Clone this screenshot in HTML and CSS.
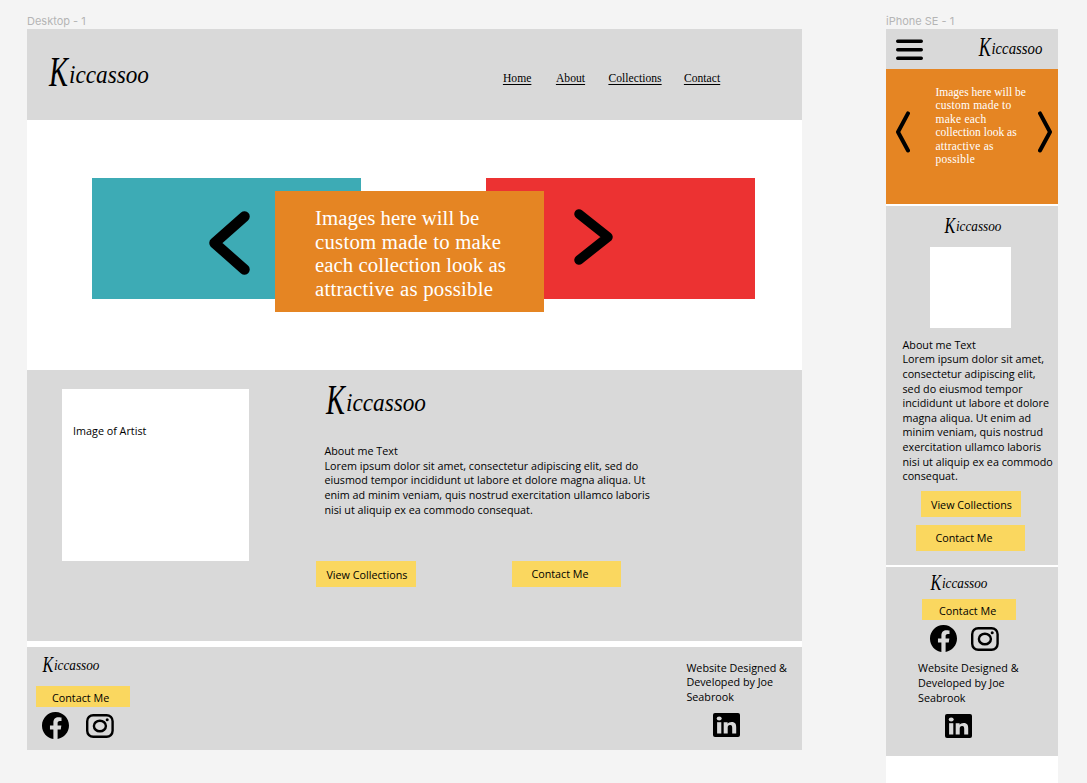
FILE: index.html
```html
<!DOCTYPE html>
<html lang="en">
<head>
<meta charset="utf-8">
<title>Kiccassoo</title>
<link rel="stylesheet" href="styles.css">
</head>
<body>
<svg class="sprite" aria-hidden="true">
  <symbol id="facebook" viewBox="0 0 16 16"><path d="M16 8.049c0-4.446-3.582-8.05-8-8.05C3.58 0-.002 3.603-.002 8.05c0 4.017 2.926 7.347 6.75 7.951v-5.625h-2.03V8.05H6.75V6.275c0-2.017 1.195-3.131 3.022-3.131.876 0 1.791.157 1.791.157v1.98h-1.009c-.993 0-1.303.621-1.303 1.258v1.51h2.218l-.354 2.326H9.25V16c3.824-.604 6.750-3.934 6.750-7.951z"/></symbol>
  <symbol id="instagram" viewBox="0 0 28 24"><rect x="1.200" y="1.200" width="25.400" height="21.600" rx="6" fill="none" stroke="#000" stroke-width="2.400"/><ellipse cx="13.900" cy="12" rx="6" ry="5.300" fill="none" stroke="#000" stroke-width="2.400"/><circle cx="21.200" cy="5.700" r="1.500"/></symbol>
  <symbol id="linkedin" viewBox="0 0 27 24"><rect width="27" height="24" rx="2"/><g fill="#d9d9d9"><ellipse cx="6.200" cy="5.500" rx="2.500" ry="2.100"/><rect x="4.100" y="9.200" width="4.200" height="11.300"/><path d="M10.700 9.200h3.900v1.600c.8-1.200 2.200-1.900 4-1.900 3.900 0 4.600 2.300 4.600 5.400v6.200h-4V15c0-1.400 0-3-2.100-3s-2.400 1.500-2.400 2.900v5.600h-4z"/></g></symbol>
</svg>
<main class="canvas">
  <section class="artboard desktop">
    <h2 class="artboard-name">Desktop - 1</h2>
    <div class="frame">
      <header class="site-header">
        <svg class="logo" viewBox="0 0 102 36"><text class="logo-text logo-cap" x="1" y="29" textLength="19" lengthAdjust="spacingAndGlyphs">K</text><text class="logo-text" x="21" y="26" textLength="80" lengthAdjust="spacingAndGlyphs">iccassoo</text></svg>
        <nav class="nav"><a class="home">Home</a><a class="about-link">About</a><a class="collections-link">Collections</a><a>Contact</a></nav>
      </header>
      <section class="hero">
        <div class="card teal"><svg class="arrow-left" viewBox="0 0 42 64"><path d="M35.500 5.500L5.500 32l30 26.500"/></svg></div>
        <div class="card orange"><p>Images here will be<br><span class="wide">custom made to make</span><br>each collection look as<br><span class="wide">attractive as possible</span></p></div>
        <div class="card red"><svg class="arrow-right" viewBox="0 0 39 56"><path d="M5 5l29 23L5 51"/></svg></div>
      </section>
      <section class="about">
        <div class="portrait">Image of Artist</div>
        <div class="about-body">
          <svg class="logo" viewBox="0 0 102 36"><text class="logo-text logo-cap" x="1" y="29" textLength="19" lengthAdjust="spacingAndGlyphs">K</text><text class="logo-text" x="21" y="26" textLength="80" lengthAdjust="spacingAndGlyphs">iccassoo</text></svg>
          <p class="copy">About me Text<br>Lorem ipsum dolor sit amet, consectetur adipiscing elit, sed do<br>eiusmod tempor incididunt ut labore et dolore magna aliqua. Ut<br>enim ad minim veniam, quis nostrud exercitation ullamco laboris<br>nisi ut aliquip ex ea commodo consequat.</p>
          <div class="actions"><a class="button view">View Collections</a><a class="button contact">Contact Me</a></div>
        </div>
      </section>
      <footer class="site-footer">
        <div class="footer-brand">
          <svg class="logo small" viewBox="0 0 102 36"><text class="logo-text logo-cap" x="1" y="29" textLength="19" lengthAdjust="spacingAndGlyphs">K</text><text class="logo-text" x="21" y="26" textLength="80" lengthAdjust="spacingAndGlyphs">iccassoo</text></svg>
          <a class="button compact">Contact Me</a>
          <div class="social"><svg class="facebook"><use href="#facebook"/></svg><svg class="instagram"><use href="#instagram"/></svg></div>
        </div>
        <div class="credit"><p>Website Designed &amp;<br>Developed by Joe<br>Seabrook</p><svg class="linkedin"><use href="#linkedin"/></svg></div>
      </footer>
    </div>
  </section>
  <section class="artboard phone">
    <h2 class="artboard-name">iPhone SE - 1</h2>
    <div class="frame">
      <header class="phone-header">
        <svg class="menu" viewBox="0 0 27 21"><path d="M1.700 2.200h23.600M1.700 10.700h23.600M1.700 19.200h23.600"/></svg>
        <svg class="logo medium" viewBox="0 0 102 36"><text class="logo-text logo-cap" x="1" y="29" textLength="19" lengthAdjust="spacingAndGlyphs">K</text><text class="logo-text" x="21" y="26" textLength="80" lengthAdjust="spacingAndGlyphs">iccassoo</text></svg>
      </header>
      <section class="phone-hero">
        <svg class="chevron" viewBox="0 0 14 42"><path d="M12 2.400L2 21l10 18.500"/></svg>
        <p>Images here will be<br><span class="wide">custom made to</span><br><span class="wide">make each</span><br>collection look as<br><span class="wide">attractive as</span><br><span class="wide">possible</span></p>
        <svg class="chevron" viewBox="0 0 14 42"><path d="M2 2.400L12 21 2 39.500"/></svg>
      </section>
      <section class="phone-about">
        <svg class="logo small" viewBox="0 0 102 36"><text class="logo-text logo-cap" x="1" y="29" textLength="19" lengthAdjust="spacingAndGlyphs">K</text><text class="logo-text" x="21" y="26" textLength="80" lengthAdjust="spacingAndGlyphs">iccassoo</text></svg>
        <div class="phone-portrait"></div>
        <p class="copy">About me Text<br>Lorem ipsum dolor sit amet,<br>consectetur adipiscing elit,<br>sed do eiusmod tempor<br>incididunt ut labore et dolore<br>magna aliqua. Ut enim ad<br>minim veniam, quis nostrud<br>exercitation ullamco laboris<br>nisi ut aliquip ex ea commodo<br>consequat.</p>
        <a class="button view">View Collections</a>
        <a class="button contact">Contact Me</a>
      </section>
      <footer class="phone-footer">
        <svg class="logo small" viewBox="0 0 102 36"><text class="logo-text logo-cap" x="1" y="29" textLength="19" lengthAdjust="spacingAndGlyphs">K</text><text class="logo-text" x="21" y="26" textLength="80" lengthAdjust="spacingAndGlyphs">iccassoo</text></svg>
        <a class="button compact">Contact Me</a>
        <div class="social"><svg class="facebook"><use href="#facebook"/></svg><svg class="instagram"><use href="#instagram"/></svg></div>
        <div class="credit"><p>Website Designed &amp;<br>Developed by Joe<br>Seabrook</p><svg class="linkedin"><use href="#linkedin"/></svg></div>
      </footer>
    </div>
  </section>
</main>
</body>
</html>
```
FILE: styles.css
```css
* { box-sizing: border-box; }
body { margin: 0; background: #f4f4f4; color: #000; font: 10.78px/14.6px "Open Sans", sans-serif; }
p, h2 { margin: 0; }
svg { display: block; flex: none; }
.sprite { position: absolute; width: 0; height: 0; }
.canvas { display: flex; gap: 83.600px; height: 783px; padding: 14px 0 0 27px; overflow: hidden; white-space: nowrap; }
.artboard { flex: none; }
.artboard-name { height: 15px; color: #b5b5b5; font: 400 11px/15px Inter, sans-serif; }
.frame { background: #fff; }
.desktop { width: 775.400px; }
.phone { width: 172px; }
.phone .frame { height: 754px; }

.logo { width: 102px; height: 36px; overflow: visible; }
.logo.small { width: 58px; height: 20.500px; }
.logo.medium { width: 65px; height: 23px; }
.logo-text { font: italic 25px "Liberation Serif", serif; }
.logo-cap { font-size: 42px; }

.site-header { display: flex; height: 91px; padding: 28px 80.500px 0 21px; background: #d9d9d9; justify-content: space-between; }
.nav { display: flex; padding-top: 14px; font: 11.600px/15px "Liberation Serif", serif; }
.nav a { text-decoration: underline; text-decoration-thickness: 1px; text-underline-offset: 2px; letter-spacing: .04px; }
.home { width: 53px; }
.about-link { width: 52.500px; }
.collections-link { width: 75.500px; }
.nav a:last-child { width: 38px; }

.hero { display: flex; height: 250px; padding: 58px 0 0 65px; }
.card { flex: none; width: 269.200px; height: 121px; }
.teal { padding: 33px 0 0 116.500px; background: #3dabb5; }
.orange { z-index: 1; margin: 13px 0 0 -86.200px; padding: 15px 0 0 40px; background: #e58523; color: #fff; font: 20.800px/23.700px "Liberation Serif", serif; letter-spacing: .04px; }
.wide { letter-spacing: .02em; }
.orange .wide { letter-spacing: .22px; }
.red { margin-left: -58.200px; padding: 31px 0 0 87.500px; background: #ec3232; }
.arrow-left { width: 42px; height: 64px; }
.arrow-right { width: 39px; height: 56px; }
.arrow-left path, .arrow-right path { fill: none; stroke: #000; stroke-width: 10.500px; stroke-linecap: round; stroke-linejoin: round; }
.arrow-right path { stroke-width: 9.500px; }

.about { display: flex; gap: 67px; height: 271px; padding: 15px 0 0 35.400px; background: #d9d9d9; }
.portrait { width: 187px; height: 171.500px; margin-top: 4.400px; padding: 35px 0 0 10.700px; background: #fff; }
.about-body .logo { margin-left: 9px; }
.about-body .copy { margin: 23.200px 0 0 8px; }
.actions { display: flex; gap: 96px; margin-top: 43.800px; }
.button { display: block; background: #fad75f; }
.button.view { width: 100px; height: 26px; padding: 7px 0 0 10px; }
.button.contact { width: 108.500px; height: 26px; padding: 6px 0 0 19px; }
.button.compact { width: 94px; height: 20.500px; padding: 4.600px 0 0 16px; }

.site-footer { display: flex; justify-content: space-between; height: 109px; padding: 8px 15px 0 9px; border-top: 6px solid #fff; background: #d9d9d9; }
.footer-brand .logo { margin-left: 6px; }
.footer-brand .button { margin-top: 10.500px; }
.social { display: flex; gap: 17px; margin: 5.500px 0 0 6px; align-items: center; }
.facebook { width: 27px; height: 27px; }
.instagram { width: 28px; height: 24px; }
.linkedin { width: 27px; height: 24px; margin: 9px 0 0 27px; }
.site-footer .credit { width: 101px; padding-top: 5.500px; }

.phone-header { display: flex; height: 40.400px; padding: 8px 15px 0 10px; background: #d9d9d9; justify-content: space-between; }
.menu { width: 27px; height: 21px; margin-top: 2px; }
.menu path { stroke: #000; stroke-width: 3.400px; stroke-linecap: round; }
.phone-hero { display: flex; height: 134.600px; padding: 16.600px 6px 0 10px; background: #e58523; color: #fff; font: 11.500px/13.500px "Liberation Serif", serif; }
.phone-hero p { width: 102.500px; margin-left: 25.500px; }
.chevron { width: 14px; height: 42px; margin-top: 25px; }
.chevron path { fill: none; stroke: #000; stroke-width: 4px; stroke-linecap: round; stroke-linejoin: round; }
.phone-about { height: 361px; padding-top: 10px; border-top: 2px solid #fff; background: #d9d9d9; }
.phone-about .logo { margin-left: 58px; }
.phone-portrait { width: 81px; height: 81px; margin: 11px 0 0 44.400px; background: #fff; }
.phone-about .copy { margin: 9.300px 0 0 16.500px; }
.phone-about .view { margin: 7.700px 0 0 35px; }
.phone-about .contact { margin: 8px 0 0 30.400px; }
.phone-footer { height: 191px; padding: 6px 0 0 32px; border-top: 2px solid #fff; background: #d9d9d9; }
.phone-footer .logo { margin-left: 12px; }
.phone-footer .button { margin: 6px 0 0 4px; padding-left: 17px; }
.phone-footer .social { gap: 14px; margin-left: 12px; }
.phone-footer .credit { padding-top: 9px; }
```
